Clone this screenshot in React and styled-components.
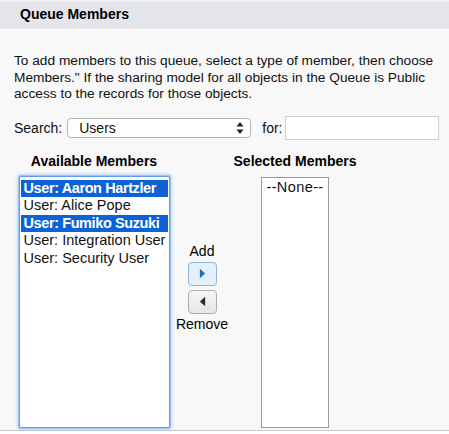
import styled, { createGlobalStyle } from 'styled-components';

const GlobalStyle = createGlobalStyle`
  html, body {
    margin: 0;
    padding: 0;
    background: #ffffff;
    overflow: hidden;
  }
  body {
    font-family: Arial, "Liberation Sans", Helvetica, sans-serif;
    color: #000;
  }
`;

const availableMembers = [
  { label: 'User: Aaron Hartzler', selected: true },
  { label: 'User: Alice Pope', selected: false },
  { label: 'User: Fumiko Suzuki', selected: true },
  { label: 'User: Integration User', selected: false },
  { label: 'User: Security User', selected: false },
];

export default function App() {
  return (
    <>
      <GlobalStyle />
      <Section>
        <SectionHeader>
          <SectionTitle>Queue Members</SectionTitle>
        </SectionHeader>
        <SectionBody>
          <Intro>
            To add members to this queue, select a type of member, then choose
            <br />
            Members." If the sharing model for all objects in the Queue is Public
            <br />
            access to the records for those objects.
          </Intro>

          <SearchRow>
            <FieldLabel>Search:</FieldLabel>
            <SelectBox>
              <span>Users</span>
              <SelectArrows viewBox="0 0 8 14" width="8" height="14">
                <path d="M4 1 L7.5 5.5 L0.5 5.5 Z" fill="#222" />
                <path d="M4 13 L7.5 8.5 L0.5 8.5 Z" fill="#222" />
              </SelectArrows>
            </SelectBox>
            <FieldLabel $gap>for:</FieldLabel>
            <SearchInput type="text" />
          </SearchRow>

          <Duel>
            <Column $width={160}>
              <ColumnTitle>Available Members</ColumnTitle>
              <AvailableList>
                {availableMembers.map((m) => (
                  <Option key={m.label} $selected={m.selected}>
                    {m.label}
                  </Option>
                ))}
              </AvailableList>
            </Column>

            <Middle>
              <ButtonLabel>Add</ButtonLabel>
              <ArrowButton $active>
                <svg viewBox="0 0 8 12" width="7" height="11">
                  <path d="M1 0.5 L7 6 L1 11.5 Z" fill="#1a6fc4" />
                </svg>
              </ArrowButton>
              <ArrowButton>
                <svg viewBox="0 0 8 12" width="7" height="11">
                  <path d="M7 0.5 L1 6 L7 11.5 Z" fill="#2b2b2b" />
                </svg>
              </ArrowButton>
              <ButtonLabel $bottom>Remove</ButtonLabel>
            </Middle>

            <Column $width={130}>
              <ColumnTitle>Selected Members</ColumnTitle>
              <SelectedList>
                <NoneOption>--None--</NoneOption>
              </SelectedList>
            </Column>
          </Duel>
        </SectionBody>
      </Section>
    </>
  );
}

const Section = styled.div`
  width: 449px;
  border-top: 2px solid #f2f2f4;
  border-bottom: 1px solid #c8c8c8;
`;

const SectionHeader = styled.div`
  background: #e4e5ea;
  height: 27px;
  box-sizing: border-box;
  display: flex;
  align-items: center;
  padding: 0 0 3px 20px;
`;

const SectionTitle = styled.h2`
  margin: 0;
  font-size: 14px;
  line-height: 16px;
  font-weight: bold;
  color: #000;
`;

const SectionBody = styled.div`
  background: #f8f8f8;
  padding: 24px 0 2px 14px;
`;

const Intro = styled.p`
  margin: 0;
  font-size: 13.7px;
  line-height: 16.5px;
  white-space: nowrap;
  color: #111;
`;

const SearchRow = styled.div`
  display: flex;
  align-items: center;
  margin-top: 13px;
  height: 24px;
`;

const FieldLabel = styled.span`
  font-size: 14px;
  color: #111;
  margin-left: ${(p) => (p.$gap ? '11px' : '0')};
  margin-right: ${(p) => (p.$gap ? '3px' : '5px')};
`;

const SelectBox = styled.div`
  box-sizing: border-box;
  width: 184px;
  height: 20px;
  display: flex;
  align-items: center;
  justify-content: space-between;
  padding: 0 6px 0 11px;
  background: #fff;
  border: 1px solid #b4b4b4;
  border-radius: 4px;
  font-size: 14px;
  color: #111;
`;

const SelectArrows = styled.svg`
  display: block;
`;

const SearchInput = styled.input`
  box-sizing: border-box;
  width: 154px;
  height: 24px;
  margin: 0;
  border: 1px solid #cfcfcf;
  background: #fff;
  outline: none;
`;

const Duel = styled.div`
  display: flex;
  align-items: flex-start;
  margin-top: 13px;
`;

const Column = styled.div`
  width: ${(p) => p.$width}px;
  display: flex;
  flex-direction: column;
  align-items: center;
`;

const ColumnTitle = styled.div`
  font-size: 14px;
  font-weight: bold;
  line-height: 16px;
  margin-bottom: 7px;
`;

const AvailableList = styled.div`
  box-sizing: border-box;
  width: 151px;
  height: 252px;
  padding: 3px 1px;
  background: #fff;
  border: 1px solid #5f9fe9;
  box-shadow: 0 0 0 1px #9cc3f2, 0 0 3px 2px rgba(120, 170, 240, 0.45);
  border-radius: 2px;
`;

const Option = styled.div`
  height: 17.5px;
  line-height: 17.5px;
  padding-left: 3px;
  font-size: 14.5px;
  white-space: nowrap;
  overflow: hidden;
  background: ${(p) => (p.$selected ? '#0d63d6' : 'transparent')};
  color: ${(p) => (p.$selected ? '#fff' : '#111')};
  font-weight: ${(p) => (p.$selected ? 'bold' : 'normal')};
  letter-spacing: ${(p) => (p.$selected ? '-0.4px' : '0')};
`;

const Middle = styled.div`
  width: 56px;
  display: flex;
  flex-direction: column;
  align-items: center;
  padding-top: 90px;
`;

const ButtonLabel = styled.div`
  font-size: 14px;
  line-height: 16px;
  margin: ${(p) => (p.$bottom ? '2px 0 0' : '0 0 3px')};
`;

const ArrowButton = styled.button`
  box-sizing: border-box;
  width: 29px;
  height: 24px;
  margin: 0 0 4px;
  padding: 0;
  display: flex;
  align-items: center;
  justify-content: center;
  border-radius: 4px;
  border: 1px solid ${(p) => (p.$active ? '#8fb4dc' : '#adadad')};
  background: ${(p) => (p.$active ? '#e4effb' : 'linear-gradient(#f6f6f6, #e6e6e6)')};
  cursor: pointer;

  & + & {
    margin-bottom: 0;
  }
`;

const SelectedList = styled.div`
  box-sizing: border-box;
  width: 68px;
  height: 251px;
  margin-top: 1px;
  padding-top: 1px;
  background: #fff;
  border: 1px solid #999;
  display: flex;
  flex-direction: column;
  align-items: center;
`;

const NoneOption = styled.div`
  font-size: 14.5px;
  line-height: 17px;
  letter-spacing: 0.4px;
  color: #111;
`;
